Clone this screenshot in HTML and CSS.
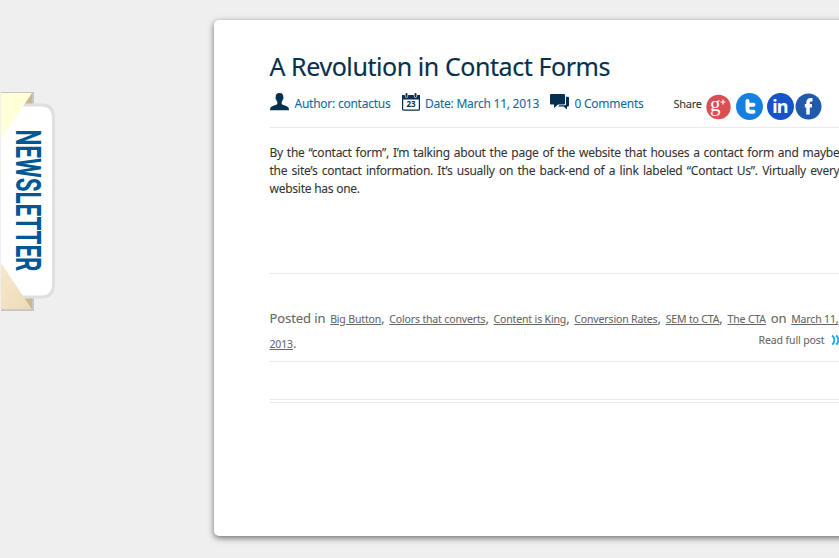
FILE: index.html
```
<!DOCTYPE html>
<html lang="en">
<head>
<meta charset="utf-8">
<title>A Revolution in Contact Forms</title>
<link rel="stylesheet" href="styles.css">
</head>
<body>
<aside class="newsletter">
<svg width="58" height="222" viewBox="0 0 58 222">
<defs>
<linearGradient id="fold" x1="0" x2="1"><stop offset="0" stop-color="#e5d5b8"/><stop offset="1" stop-color="#c9b58f"/></linearGradient>
<linearGradient id="sand" x1="0" x2="1" y1="0" y2="1"><stop offset="0" stop-color="#f8e9cd"/><stop offset="1" stop-color="#eddab6"/></linearGradient>
</defs>
<path d="M1 1H34V220H1Z" fill="#c6c6c6"/>
<path d="M1 2H32V218H1Z" fill="url(#fold)"/>
<path d="M1 12.500H42Q55 12.500 55 26V193Q55 207.500 42 207.500H1Z" fill="#dfdfdf"/>
<path d="M1 15.500H41Q52 15.500 52 27V193Q52 204.500 41 204.500H1Z" fill="#fff"/>
<path d="M1 2H32L1 48Z" fill="#ffffd8"/>
<path d="M1 172L32 218.500H1Z" fill="url(#sand)"/>
<path d="M1 1.500H33M1 219H33" stroke="#c5c3c5"/>
<text class="newsletter-text" transform="translate(16 38.500) rotate(90)" textLength="142" lengthAdjust="spacingAndGlyphs">NEWSLETTER</text>
</svg>
</aside>
<main class="card">
<article class="post">
<h1><span>A Revolution in Contact Forms</span></h1>
<div class="meta">
<svg class="icon-user" width="19" height="18" viewBox="0 0 19 18"><path d="M9.500 0C6.600 0 5.500 1.700 5.700 4.300C5.200 4.700 5.500 6 6.200 6.400C6.400 7.700 7 8.400 7.300 9V11C6.400 12.100 1.500 12.900.6 14.500C.1 15.400 0 16.500 0 17.200H19C19 16.500 18.900 15.400 18.400 14.500C17.500 12.900 12.600 12.100 11.700 11V9C12 8.400 12.600 7.700 12.800 6.400C13.500 6 13.800 4.700 13.300 4.300C13.500 1.700 12.400 0 9.500 0Z" fill="#06304f"/></svg>
<span class="author">Author: contactus</span>
<svg class="icon-date" width="18" height="18" viewBox="0 0 18 18"><rect x=".6" y="2.600" width="16.800" height="14.600" rx="1" fill="#fff" stroke="#06304f" stroke-width="1.200"/><path d="M0 2H18V6.500H0Z" fill="#06304f"/><path d="M4.500 1V3M13.500 1V3" stroke="#fff" stroke-width="3.400" stroke-linecap="round"/><path d="M4.500 1V3.300M13.500 1V3.300" stroke="#06304f" stroke-width="2" stroke-linecap="round"/><text x="9" y="14.300" class="day">23</text></svg>
<span class="date">Date: March 11, 2013</span>
<svg class="icon-chat" width="20" height="16" viewBox="0 0 20 16"><path d="M1 0H14Q15 0 15 1V9.500Q15 10.500 14 10.500H8L4 14V10.500H1Q0 10.500 0 9.500V1Q0 0 1 0Z" fill="#06304f"/><path d="M16 2.800H18Q19 2.800 19 3.800V11.500Q19 12.500 18 12.500H17V15.500L13.500 12.500H8L9.500 11.300H15Q16 11.300 16 10.300Z" fill="#06304f"/></svg>
<span class="comments">0 Comments</span>
<span class="share">Share</span>
<div class="social">
<svg width="118" height="30" viewBox="0 0 118 30">
<circle cx="13.500" cy="15" r="12.200" fill="#dc4e53"/>
<text x="5" y="19" class="gplus">g</text><path d="M15.500 10H20.500M18 7.500V12.500" stroke="#fff" stroke-width="1.200"/>
<circle cx="44.500" cy="14.500" r="13.500" fill="#1680df"/>
<path d="M42.500 9V17Q42.500 19.700 45.200 19.700H48.500M42.500 12.700H48.500" fill="none" stroke="#fff" stroke-width="3.900" stroke-linecap="round" stroke-linejoin="round"/>
<circle cx="75.500" cy="14.500" r="13.500" fill="#1753c8"/>
<text x="67.300" y="21" class="linkedin" textLength="16">in</text>
<circle cx="103.500" cy="14.500" r="13" fill="#205bab"/>
<path d="M107.500 7.800H106Q103 7.800 103 10.800V22.500M99.800 13.700H107" fill="none" stroke="#fff" stroke-width="3.500"/>
</svg>
</div>
</div>
<div class="body">
<p class="line">By the “contact form”, I’m talking about the page of the website that houses a contact form and maybe</p>
<p class="line">the site’s contact information. It’s usually on the back-end of a link labeled “Contact Us”. Virtually every</p>
<p class="line last">website has one.</p>
</div>
<footer>
<div class="posted"><span class="in">Posted in</span><span><a>Big Button</a>,</span><span><a>Colors that converts</a>,</span><span><a>Content is King</a>,</span><span><a>Conversion Rates</a>,</span><span><a>SEM to CTA</a>,</span><a>The CTA</a><span>on</span><a>March 11,</a></div>
<div class="second"><span><a>2013</a>.</span><span class="read">Read full post<svg width="9" height="10" viewBox="0 0 9 10"><path d="M1 .7Q3 1.500 3 3.500Q3 5 4 5Q3 5 3 6.500Q3 8.500 1 9.300M5 .7Q7 1.500 7 3.500Q7 5 8 5Q7 5 7 6.500Q7 8.500 5 9.300" fill="none" stroke="#26abe2" stroke-width="2"/></svg></span></div>
</footer>
<div class="divider"></div>
</article>
</main>
</body>
</html>
```
FILE: styles.css
```
* { box-sizing: border-box; }
body {
  margin: 0;
  height: 558px;
  overflow: hidden;
  display: flex;
  background: #efefef;
  font-family: "Noto Sans", "Open Sans", sans-serif;
  font-size: 12px;
  color: #333;
}
svg { display: block; flex: none; }
.newsletter { flex: 0 0 214px; padding-top: 91px; }
.newsletter-text { font: bold 35px Roboto, sans-serif; fill: #005792; }
.card {
  flex: 0 0 680px;
  height: 516px;
  margin-top: 20px;
  padding: 26px 55px 0;
  background: #fff;
  border-radius: 5px;
  box-shadow: 0 2px 6px rgba(0, 0, 0, .55);
}
.post { width: 570px; margin-left: .5px; white-space: nowrap; -webkit-text-stroke: .08px; }
.post svg { -webkit-text-stroke: 0; }
h1 {
  margin: 0;
  height: 41px;
  font-size: 25px;
  line-height: 40px;
  font-weight: 400;
  letter-spacing: -.43px;
  color: #06304f;
  -webkit-text-stroke: .15px;
}
.meta {
  display: flex;
  height: 41px;
  border-bottom: 1px solid #eaeaea;
  color: #166a9a;
  line-height: 34px;
  letter-spacing: -.25px;
}
.icon-user { margin: 6px 6px 0 0; }
.author { width: 107px; }
.icon-date { margin-top: 6px; }
.day { font: bold 8px "Noto Sans", sans-serif; fill: #06304f; text-anchor: middle; letter-spacing: 0; }
.date { width: 124.5px; margin-left: 5.5px; }
.icon-chat { margin-top: 7px; }
.comments { width: 99px; margin-left: 5px; }
.share { width: 31px; color: #333; font-size: 11px; line-height: 33px; }
.social { margin-top: 5px; }
.gplus { font: 21px "Liberation Serif", serif; fill: #fff; letter-spacing: 0; }
.linkedin { font: bold 18px "Noto Sans", sans-serif; fill: #fff; }
.body { height: 146px; padding-top: 16px; border-bottom: 1px solid #eaeaea; }
.line {
  width: 570px;
  margin: 0;
  line-height: 18px;
  letter-spacing: -.25px;
  text-align: justify;
  text-align-last: justify;
}
.line.last { text-align-last: left; }
footer {
  height: 88px;
  padding-top: 32px;
  border-bottom: 1px solid #eaeaea;
  color: #666;
  font-size: 13px;
  letter-spacing: -.1px;
}
footer a { font-size: 10.5px; text-decoration: underline; text-underline-offset: 1px; letter-spacing: -.15px; }
.posted, .second { display: flex; justify-content: space-between; align-items: baseline; line-height: 25px; }
.posted { width: 569px; }
.second { align-items: flex-start; height: 25px; line-height: 22px; }
.read { display: flex; align-items: center; gap: 6px; margin-top: -1px; font-size: 10.5px; line-height: 18px; letter-spacing: -.1px; }
.divider { height: 41px; border-bottom: 1px solid #eaeaea; position: relative; }
.divider::after { content: ""; position: absolute; left: 0; right: 0; bottom: 2px; border-bottom: 1px solid #eaeaea; }
```
